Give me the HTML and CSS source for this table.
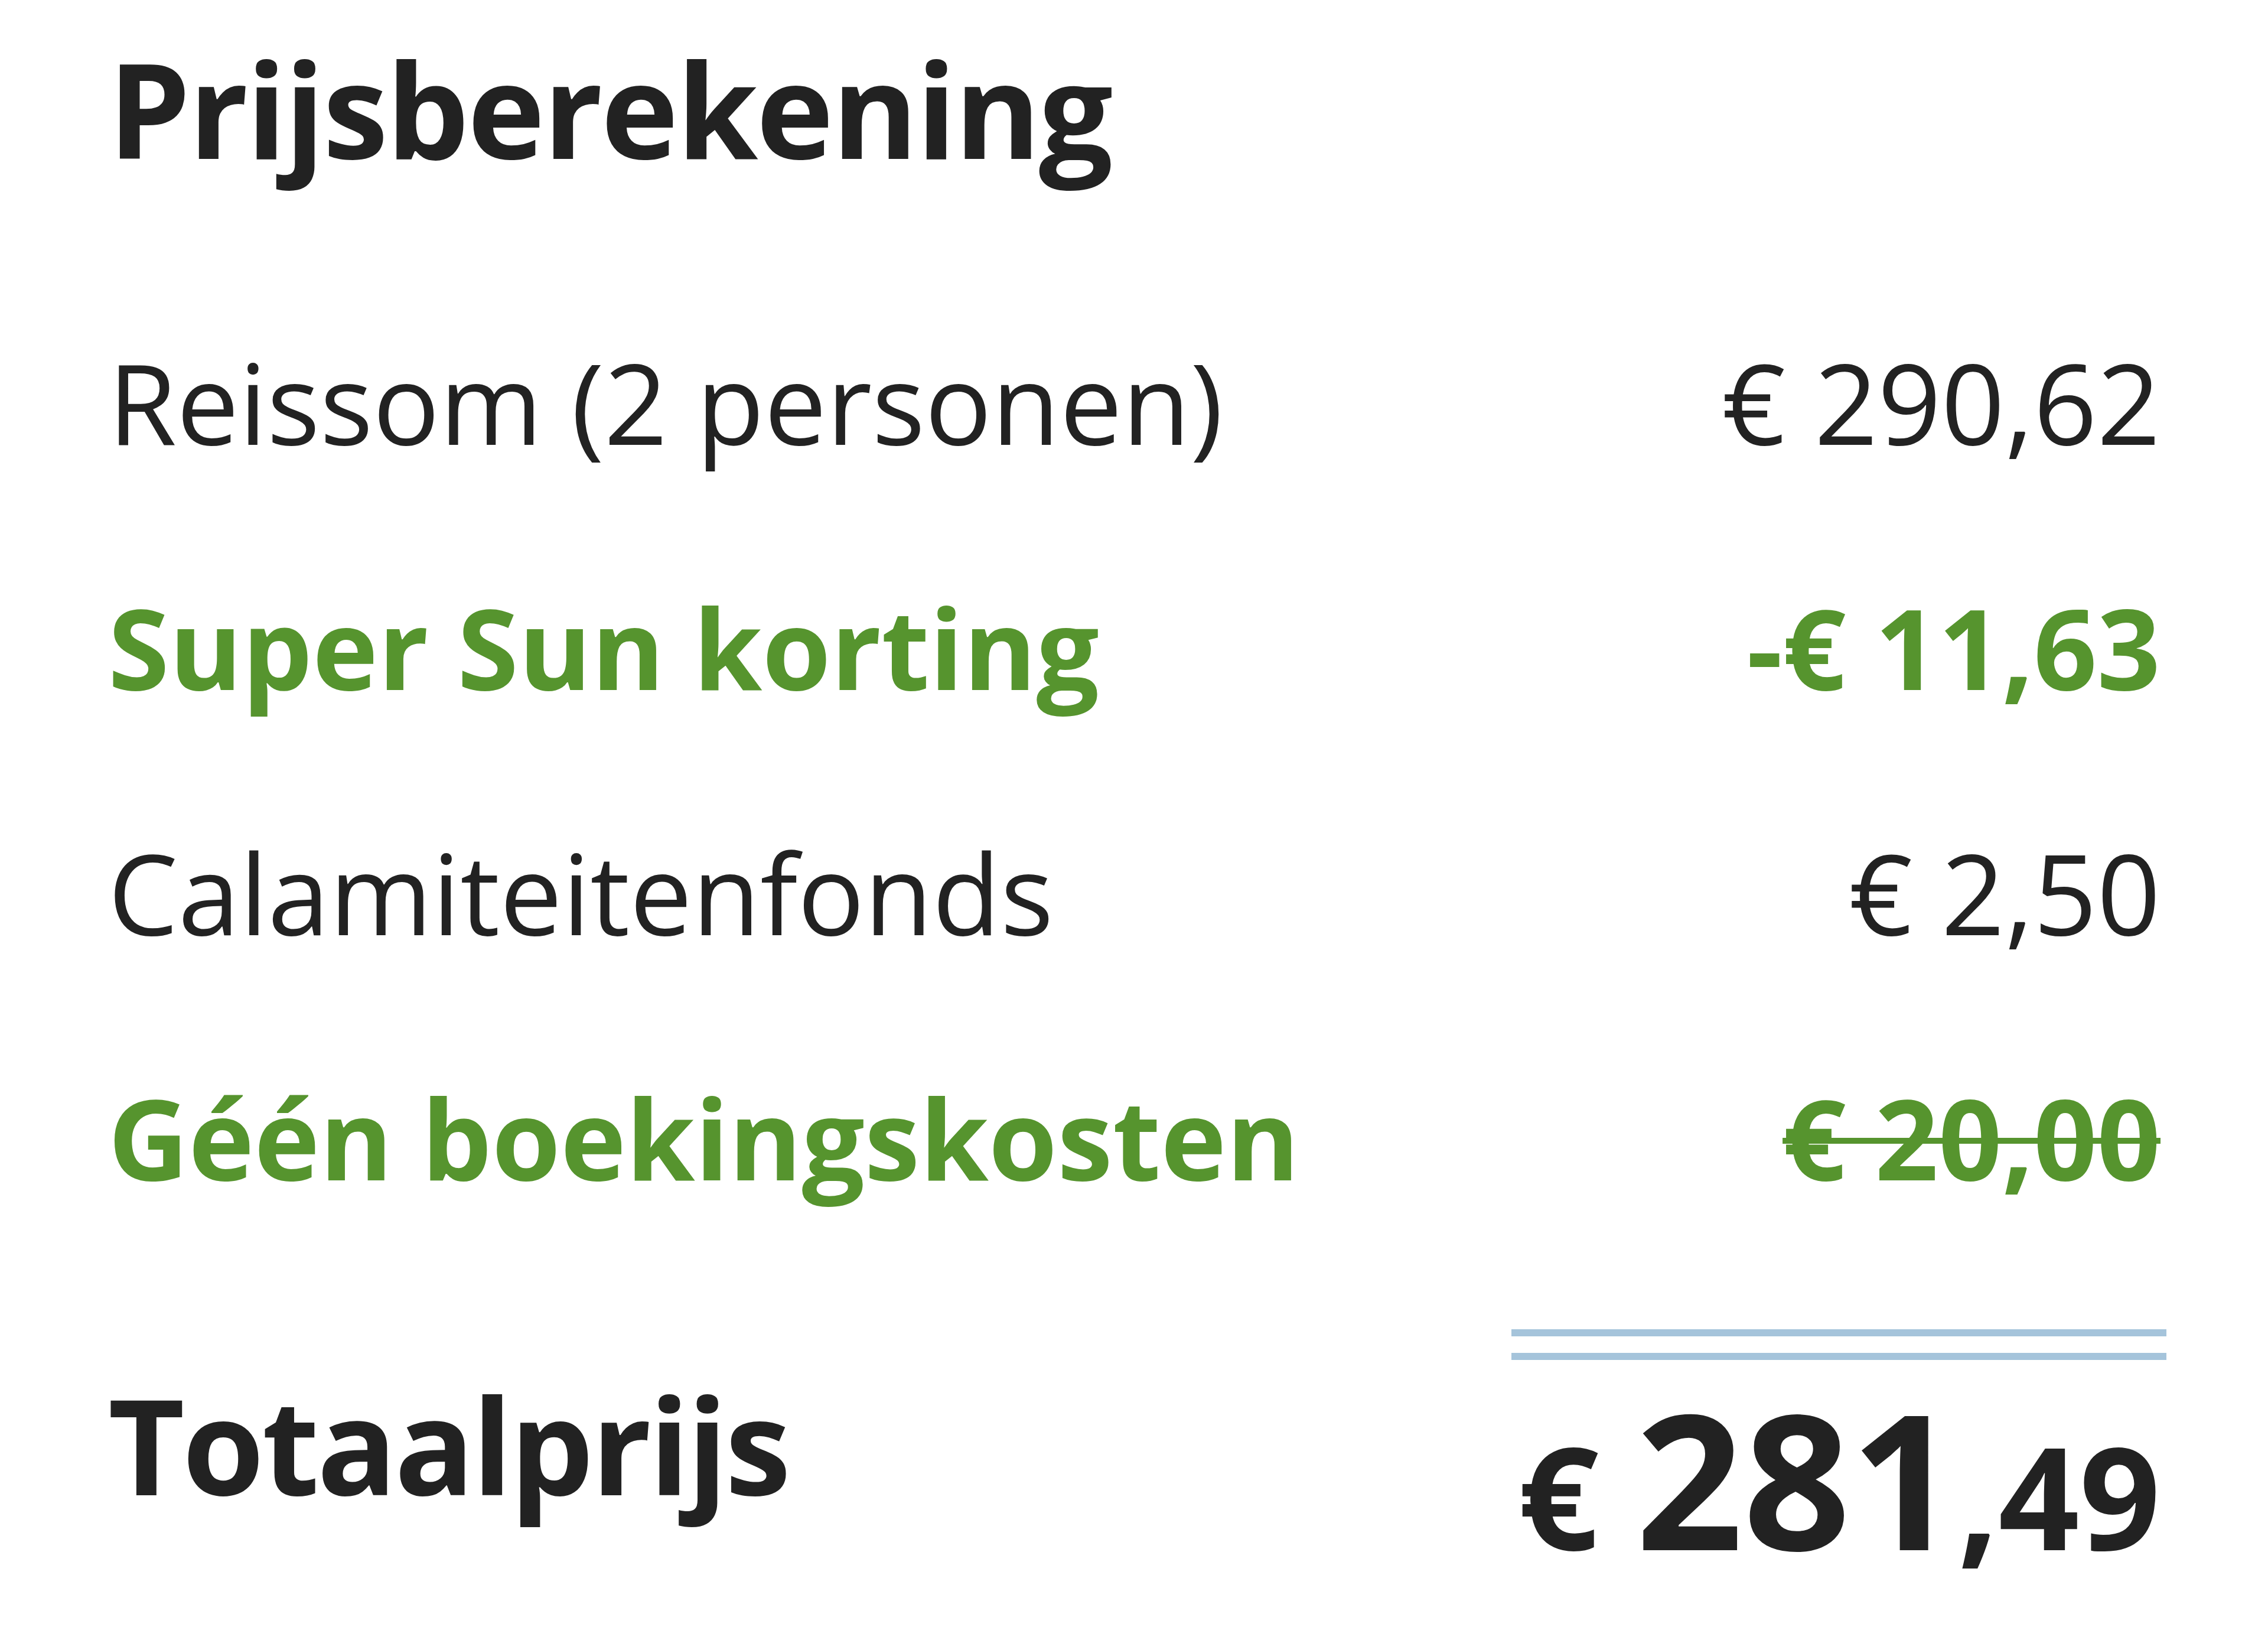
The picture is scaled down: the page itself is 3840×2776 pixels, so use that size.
FILE: index.html
```html
<!DOCTYPE html>
<html lang="nl">
<head>
<meta charset="utf-8">
<title>Prijsberekening</title>
<link rel="stylesheet" href="styles.css">
</head>
<body>
<div class="price-card">
  <h2 class="title">Prijsberekening</h2>
  <div class="rows">
    <div class="row">
      <span class="label">Reissom (2 personen)</span>
      <span class="value">€ 290,62</span>
    </div>
    <div class="row green">
      <span class="label">Super Sun korting</span>
      <span class="value">-€ 11,63</span>
    </div>
    <div class="row">
      <span class="label">Calamiteitenfonds</span>
      <span class="value">€ 2,50</span>
    </div>
    <div class="row green">
      <span class="label">Géén boekingskosten</span>
      <span class="value"><s>€ 20,00</s></span>
    </div>
  </div>
  <div class="total">
    <span class="total-label">Totaalprijs</span>
    <div class="total-right">
      <div class="double-rule"></div>
      <div class="total-amount"><span class="cur">€</span> <span class="big">281</span><span class="cents">,49</span></div>
    </div>
  </div>
</div>
</body>
</html>
```
FILE: styles.css
```css
html, body {
  margin: 0;
  padding: 0;
  background: #ffffff;
}

body {
  font-family: "Open Sans", "Liberation Sans", sans-serif;
  color: #222222;
}

.price-card {
  width: 3485px;
  padding-left: 183px;
}

.title {
  margin: 32px 0 0 0;
  font-size: 222px;
  font-weight: 700;
  line-height: 302px;
  letter-spacing: -3px;
  color: #222222;
}

.rows {
  margin-top: 139px;
}

.row {
  display: flex;
  justify-content: space-between;
  font-size: 188px;
  line-height: 415px;
  font-weight: 400;
}

.row .value {
  padding-right: 10px;
}

.row.green {
  color: #56942e;
  font-weight: 700;
}

.row.green s {
  text-decoration-thickness: 10px;
}

.total {
  display: flex;
  justify-content: space-between;
  align-items: flex-start;
}

.total-label {
  margin-top: 200px;
  font-size: 224px;
  font-weight: 700;
  line-height: 1;
  letter-spacing: -4px;
}

.total-right {
  width: 1109px;
}

.double-rule {
  margin-top: 117px;
  height: 28px;
  border-top: 12px solid #a5c4db;
  border-bottom: 12px solid #a5c4db;
}

.total-amount {
  margin-top: 40px;
  text-align: right;
  padding-right: 10px;
  font-weight: 700;
  line-height: 1;
  font-size: 240px;
}

.total-amount .big {
  font-size: 318px;
}
```
